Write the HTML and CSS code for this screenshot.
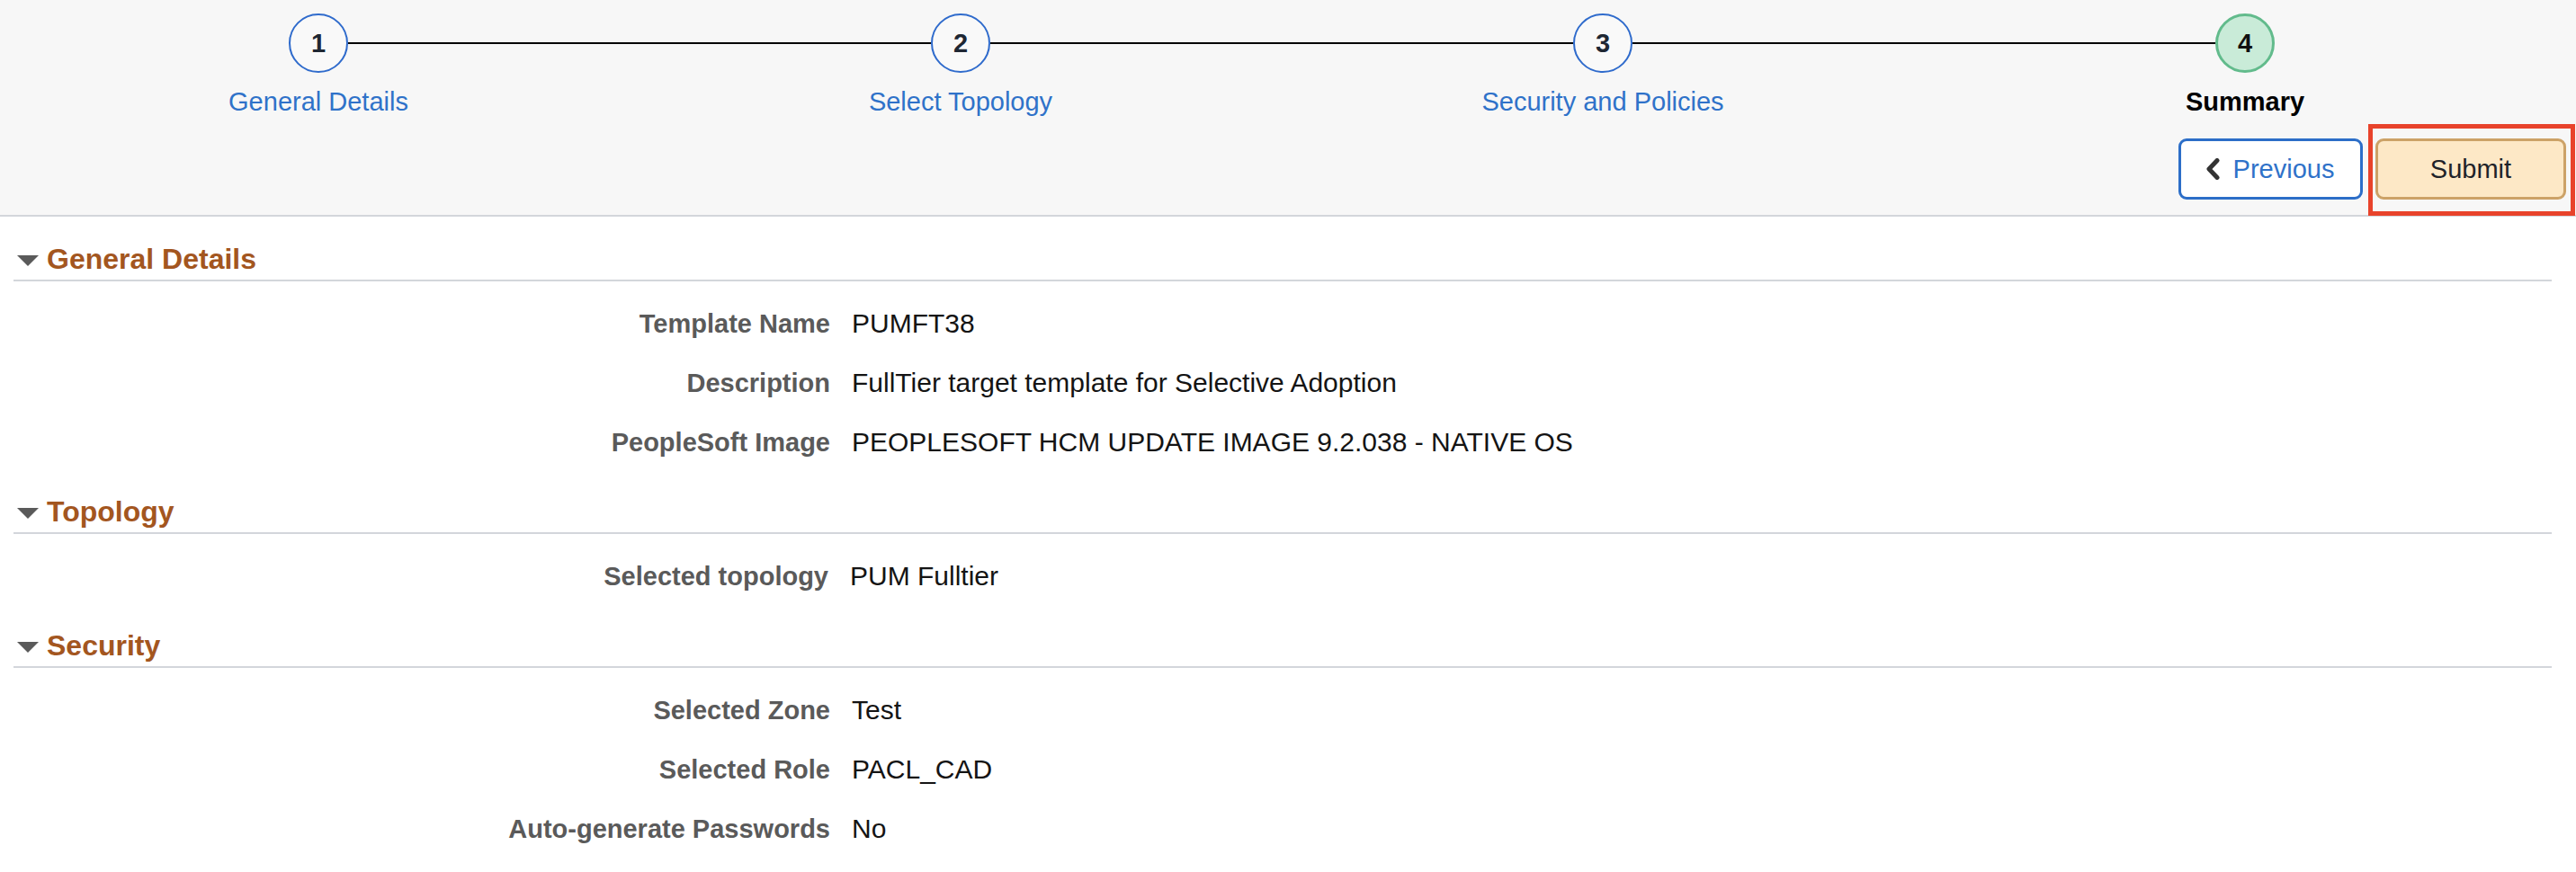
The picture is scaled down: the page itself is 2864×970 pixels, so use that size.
FILE: index.html
```html
<!DOCTYPE html>
<html lang="en">
<head>
<meta charset="utf-8">
<title>Summary</title>
<link rel="stylesheet" href="styles.css">
</head>
<body>
<header class="wizard">
  <ol class="steps">
    <li class="step done">
      <span class="circle">1</span>
      <a class="step-label" href="#">General Details</a>
    </li>
    <li class="step done">
      <span class="circle">2</span>
      <a class="step-label" href="#">Select Topology</a>
    </li>
    <li class="step done">
      <span class="circle">3</span>
      <a class="step-label" href="#">Security and Policies</a>
    </li>
    <li class="step current">
      <span class="circle">4</span>
      <span class="step-label">Summary</span>
    </li>
  </ol>
  <div class="actions">
    <button class="btn btn-prev" type="button">
      <svg class="chev" width="16" height="24" viewBox="0 0 16 24" aria-hidden="true"><polyline points="13,2.5 4,12 13,21.5" fill="none" stroke="#333" stroke-width="5" stroke-linecap="round" stroke-linejoin="round"/></svg>
      <span>Previous</span>
    </button>
    <span class="highlight-wrap">
      <button class="btn btn-submit" type="button">Submit</button>
      <span class="highlight"></span>
    </span>
  </div>
</header>

<main class="content">
  <section class="group">
    <h2 class="group-title"><span class="tri"></span>General Details</h2>
    <dl class="rows">
      <dt>Template Name</dt><dd>PUMFT38</dd>
      <dt>Description</dt><dd>FullTier target template for Selective Adoption</dd>
      <dt>PeopleSoft Image</dt><dd>PEOPLESOFT HCM UPDATE IMAGE 9.2.038 - NATIVE OS</dd>
    </dl>
  </section>
  <section class="group">
    <h2 class="group-title"><span class="tri"></span>Topology</h2>
    <dl class="rows rows-tight">
      <dt>Selected topology</dt><dd>PUM Fulltier</dd>
    </dl>
  </section>
  <section class="group">
    <h2 class="group-title"><span class="tri"></span>Security</h2>
    <dl class="rows">
      <dt>Selected Zone</dt><dd>Test</dd>
      <dt>Selected Role</dt><dd>PACL_CAD</dd>
      <dt>Auto-generate Passwords</dt><dd>No</dd>
    </dl>
  </section>
</main>
</body>
</html>
```

FILE: styles.css
```css
* { box-sizing: border-box; }

html, body {
  margin: 0;
  padding: 0;
  background: #ffffff;
  font-family: "Liberation Sans", Arial, Helvetica, sans-serif;
  color: #161616;
}

body { overflow: hidden; }

/* ---------- wizard header ---------- */
.wizard {
  background: #f7f7f7;
  border-bottom: 2px solid #d3d6db;
  padding: 15px 11px 17px 0;
}

.steps {
  list-style: none;
  margin: 0 0 0 -3px;
  padding: 0;
  display: grid;
  grid-template-columns: repeat(4, 1fr);
}

.step {
  position: relative;
  display: flex;
  flex-direction: column;
  align-items: center;
}

.step:not(:last-child)::after {
  content: "";
  position: absolute;
  top: 32px;
  left: calc(50% + 33px);
  width: calc(100% - 66px);
  height: 2px;
  background: #000;
}

.circle {
  width: 66px;
  height: 66px;
  border-radius: 50%;
  border: 2px solid #2f6bcc;
  background: #f9f9f9;
  display: flex;
  align-items: center;
  justify-content: center;
  font-size: 29px;
  font-weight: 700;
  color: #1e2733;
}

.step.current .circle {
  border: 3px solid #62bb8c;
  background: #c9ebd8;
  color: #111;
}

.step-label {
  margin-top: 15px;
  font-size: 29px;
  line-height: 34px;
  color: #2f72c9;
  text-decoration: none;
  white-space: nowrap;
}

.step.current .step-label {
  color: #000;
  font-weight: 700;
}

.actions {
  display: flex;
  justify-content: flex-end;
  gap: 14px;
  margin-top: 24px;
}

.btn {
  height: 68px;
  border-radius: 9px;
  border: 3px solid;
  font-family: inherit;
  font-size: 29px;
  display: flex;
  align-items: center;
  justify-content: center;
  padding: 0;
  cursor: pointer;
}

.btn-prev {
  width: 205px;
  background: #ffffff;
  border-color: #2c6ec8;
  color: #2f72c9;
  gap: 15px;
  padding-right: 2px;
}

.chev { display: block; flex: none; }

.btn-submit {
  width: 212px;
  background: #fde8c6;
  border-color: #cca267;
  color: #1f2329;
}

.highlight-wrap {
  position: relative;
  display: block;
}

.highlight {
  position: absolute;
  left: -8px;
  right: -10px;
  top: -16px;
  bottom: -18px;
  border: 5px solid #e8432b;
  pointer-events: none;
}

/* ---------- content ---------- */
.content {
  padding: 0 27px 0 15px;
}

.group { margin-top: 24px; }
.group:first-child { margin-top: 27px; }

.group-title {
  margin: 0;
  display: flex;
  align-items: center;
  height: 45px;
  padding-bottom: 3px;
  font-size: 32px;
  line-height: 40px;
  font-weight: 700;
  color: #a3561f;
  border-bottom: 2px solid #d3d6db;
}

.tri {
  width: 0;
  height: 0;
  margin: 4px 9px 0 4px;
  border-left: 12px solid transparent;
  border-right: 12px solid transparent;
  border-top: 12px solid #5a5a5a;
}

.rows {
  margin: 14px 0 0 0;
  display: grid;
  grid-template-columns: 908px 1fr;
  column-gap: 24px;
  font-size: 29px;
}

.rows dt,
.rows dd {
  margin: 0;
  height: 66px;
  line-height: 66px;
  white-space: nowrap;
}

.rows dt {
  text-align: right;
  font-weight: 700;
  color: #5a5a5a;
}

.rows dd {
  font-size: 30px;
  color: #141414;
}

.rows-tight {
  grid-template-columns: 906px 1fr;
}
```
